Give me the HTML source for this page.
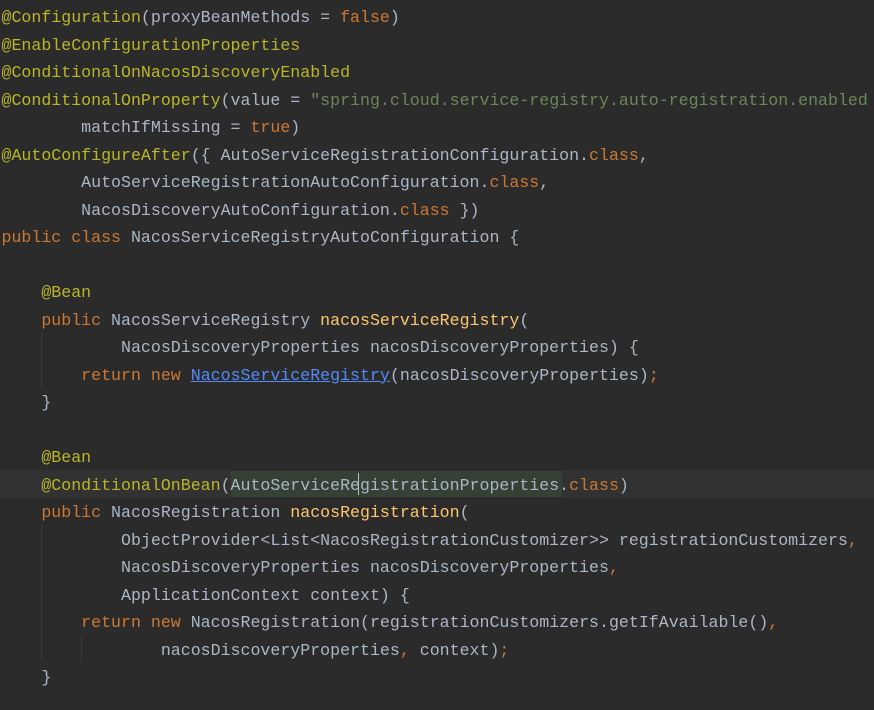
<!DOCTYPE html>
<html><head><meta charset="utf-8"><style>
html,body{margin:0;padding:0;background:#2b2b2b;width:874px;height:710px;overflow:hidden}
pre{margin:0;position:absolute;left:1.5px;top:4px;font-family:"Liberation Mono",monospace;font-size:16.6px;line-height:27.5px;color:#a9b7c6;white-space:pre}
.a{color:#bbb529}.k{color:#cc7832}.s{color:#6a8759}.m{color:#ffc66d}.l{color:#548af7;text-decoration:underline}
.hl{position:absolute;left:0;top:470px;width:874px;height:28px;background:#323232}
.box{position:absolute;left:231px;top:471px;width:331px;height:26px;background:#344134}
.g{position:absolute;width:1px;background:#3b3b3b}
.cur{position:absolute;left:358px;top:473px;width:1px;height:22px;background:#c0c0c0}
</style></head><body>
<div class="hl"></div><div class="box"></div>
<div class="g" style="left:41px;top:333px;height:55px"></div>
<div class="g" style="left:41px;top:525px;height:135px"></div>
<div class="g" style="left:81px;top:635px;height:27px"></div>
<div class="cur"></div>
<pre><span class="a">@Configuration</span>(proxyBeanMethods = <span class="k">false</span>)
<span class="a">@EnableConfigurationProperties</span>
<span class="a">@ConditionalOnNacosDiscoveryEnabled</span>
<span class="a">@ConditionalOnProperty</span>(value = <span class="s">"spring.cloud.service-registry.auto-registration.enabled</span>
        matchIfMissing = <span class="k">true</span>)
<span class="a">@AutoConfigureAfter</span>({ AutoServiceRegistrationConfiguration.<span class="k">class</span>,
        AutoServiceRegistrationAutoConfiguration.<span class="k">class</span>,
        NacosDiscoveryAutoConfiguration.<span class="k">class</span> })
<span class="k">public class</span> NacosServiceRegistryAutoConfiguration {

    <span class="a">@Bean</span>
    <span class="k">public</span> NacosServiceRegistry <span class="m">nacosServiceRegistry</span>(
            NacosDiscoveryProperties nacosDiscoveryProperties) {
        <span class="k">return new</span> <span class="l">NacosServiceRegistry</span>(nacosDiscoveryProperties)<span class="k">;</span>
    }

    <span class="a">@Bean</span>
    <span class="a">@ConditionalOnBean</span>(AutoServiceRegistrationProperties.<span class="k">class</span>)
    <span class="k">public</span> NacosRegistration <span class="m">nacosRegistration</span>(
            ObjectProvider&lt;List&lt;NacosRegistrationCustomizer&gt;&gt; registrationCustomizers<span class="k">,</span>
            NacosDiscoveryProperties nacosDiscoveryProperties<span class="k">,</span>
            ApplicationContext context) {
        <span class="k">return new</span> NacosRegistration(registrationCustomizers.getIfAvailable()<span class="k">,</span>
                nacosDiscoveryProperties<span class="k">,</span> context)<span class="k">;</span>
    }
</pre>
</body></html>
